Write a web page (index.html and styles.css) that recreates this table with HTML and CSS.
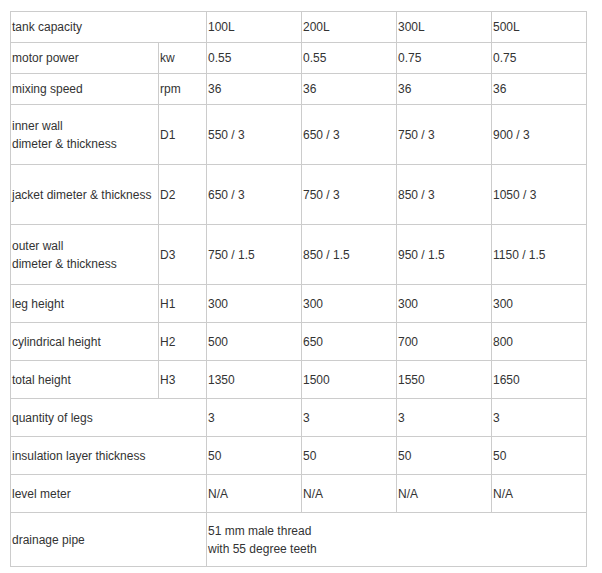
FILE: index.html
```html
<!DOCTYPE html>
<html>
<head>
<meta charset="utf-8">
<link rel="stylesheet" href="styles.css">
</head>
<body>
<table class="spec">
<colgroup>
<col class="c-name"><col class="c-unit"><col class="c-val"><col class="c-val"><col class="c-val"><col class="c-val">
</colgroup>
<tbody>
<tr class="r-s"><td colspan="2">tank capacity</td><td>100L</td><td>200L</td><td>300L</td><td>500L</td></tr>
<tr class="r-s"><td>motor power</td><td>kw</td><td>0.55</td><td>0.55</td><td>0.75</td><td>0.75</td></tr>
<tr class="r-s"><td>mixing speed</td><td>rpm</td><td>36</td><td>36</td><td>36</td><td>36</td></tr>
<tr class="r-l"><td>inner wall<br>dimeter &amp; thickness</td><td>D1</td><td>550 / 3</td><td>650 / 3</td><td>750 / 3</td><td>900 / 3</td></tr>
<tr class="r-l"><td>jacket dimeter &amp; thickness</td><td>D2</td><td>650 / 3</td><td>750 / 3</td><td>850 / 3</td><td>1050 / 3</td></tr>
<tr class="r-l"><td>outer wall<br>dimeter &amp; thickness</td><td>D3</td><td>750 / 1.5</td><td>850 / 1.5</td><td>950 / 1.5</td><td>1150 / 1.5</td></tr>
<tr class="r-m"><td>leg height</td><td>H1</td><td>300</td><td>300</td><td>300</td><td>300</td></tr>
<tr class="r-m"><td>cylindrical height</td><td>H2</td><td>500</td><td>650</td><td>700</td><td>800</td></tr>
<tr class="r-m"><td>total height</td><td>H3</td><td>1350</td><td>1500</td><td>1550</td><td>1650</td></tr>
<tr class="r-m"><td colspan="2">quantity of legs</td><td>3</td><td>3</td><td>3</td><td>3</td></tr>
<tr class="r-m"><td colspan="2">insulation layer thickness</td><td>50</td><td>50</td><td>50</td><td>50</td></tr>
<tr class="r-m"><td colspan="2">level meter</td><td>N/A</td><td>N/A</td><td>N/A</td><td>N/A</td></tr>
<tr class="r-d"><td colspan="2">drainage pipe</td><td colspan="4">51 mm male thread<br>with 55 degree teeth</td></tr>
</tbody>
</table>
</body>
</html>
```
FILE: styles.css
```css
html, body {
  margin: 0;
  padding: 0;
  background: #fff;
}
body {
  padding: 11px 0 0 10px;
  font-family: "Liberation Sans", Arial, sans-serif;
  font-size: 12px;
  color: #333;
}
.spec {
  border-collapse: collapse;
  table-layout: fixed;
  width: 577px;
}
.c-name { width: 148px; }
.c-unit { width: 48px; }
.c-val { width: 95px; }
.spec td {
  border: 1px solid #ccc;
  padding: 0 0 0 1px;
  line-height: 18px;
  vertical-align: middle;
  text-align: left;
}
.r-s td { height: 30px; }
.r-l td { height: 59px; }
.r-m td { height: 37px; }
.r-d td { height: 53px; }
```
